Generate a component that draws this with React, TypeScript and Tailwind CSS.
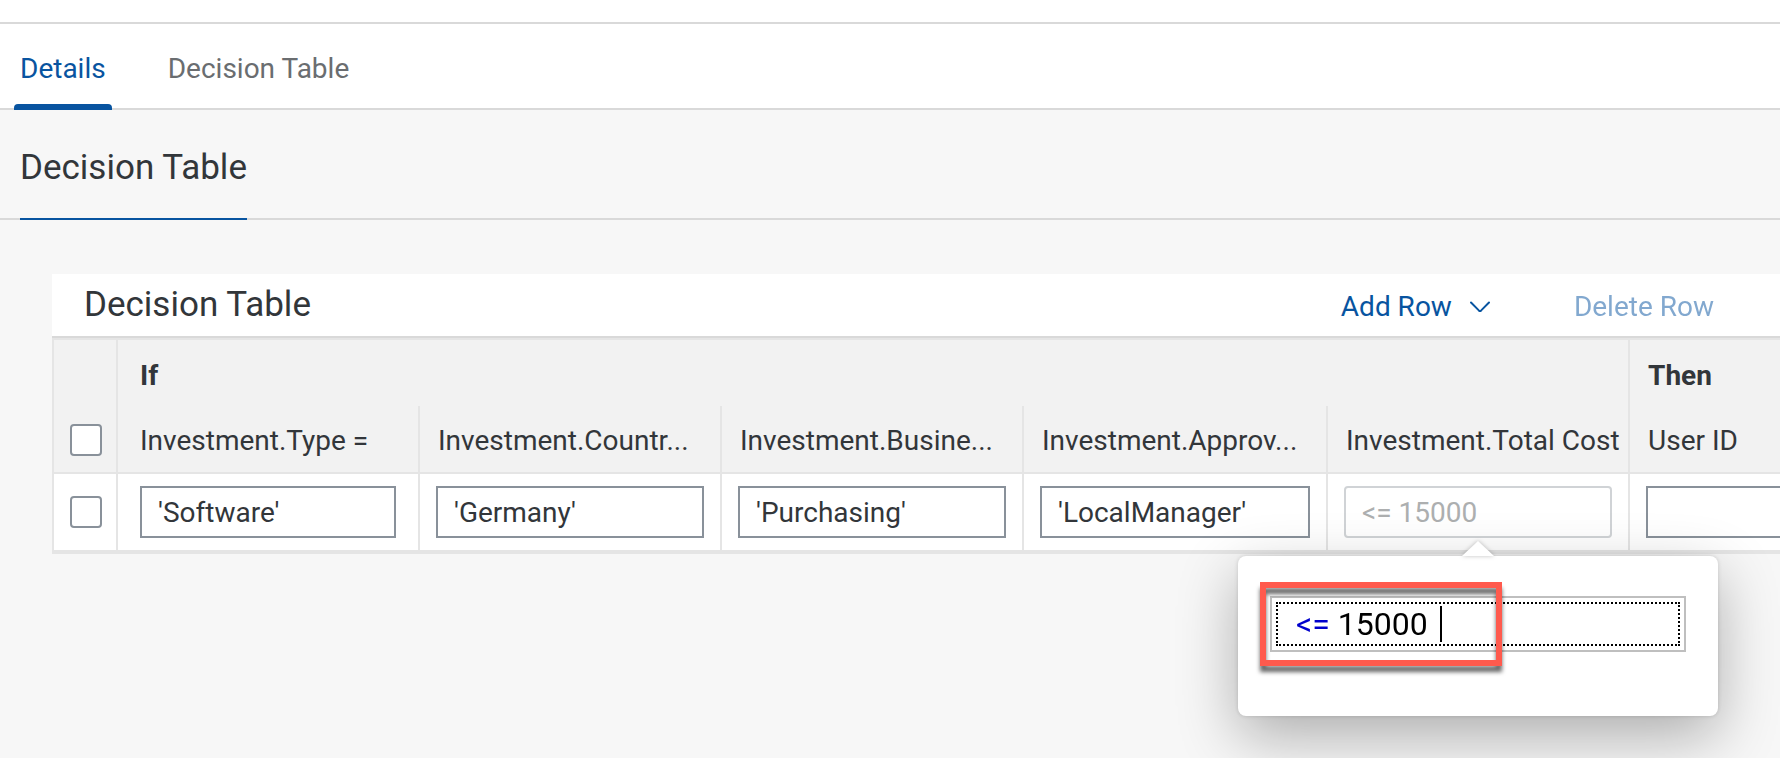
import React from "react";

const conditions = [
  { label: "Investment.Type =", value: "'Software'" },
  { label: "Investment.Countr...", value: "'Germany'" },
  { label: "Investment.Busine...", value: "'Purchasing'" },
  { label: "Investment.Approv...", value: "'LocalManager'" },
  { label: "Investment.Total Cost", value: "<= 15000", locked: true },
];

function RowCheckbox({ label }: { label: string }) {
  return (
    <input
      type="checkbox"
      aria-label={label}
      className="block h-8 w-8 appearance-none rounded border-2 border-[#89919a] bg-white checked:bg-[#0854a0]"
    />
  );
}

function ExpressionPopover() {
  return (
    <div
      role="dialog"
      aria-label="Edit expression"
      className="absolute top-full left-1/2 z-10 mt-[18px] w-[480px] -translate-x-1/2 rounded-lg bg-white px-8 pt-10 pb-16 shadow-[0_20px_60px_rgba(0,0,0,0.3),0_0_4px_rgba(0,0,0,0.15)]"
    >
      <svg
        className="absolute bottom-full left-1/2 -translate-x-1/2 drop-shadow-[0_0_2px_rgba(0,0,0,0.25)]"
        width="32"
        height="15"
        viewBox="0 0 32 15"
        aria-hidden="true"
      >
        <path d="M0 15 L16 0 L32 15 Z" fill="#fff" />
      </svg>
      <div className="relative border-2 border-[#bfbfbf] p-1">
        <div className="relative flex h-11 items-center border-2 border-dotted border-black">
          <input
            type="text"
            aria-label="Total cost expression"
            defaultValue="<= 15000"
            className="h-full w-full bg-[linear-gradient(90deg,#0000cc_56px,#000_56px)] bg-clip-text pl-[18px] text-[32px] leading-10 text-transparent outline-none"
          />
          <span className="absolute top-0.5 left-[162px] h-9 w-0.5 bg-black" />
        </div>
        <div className="pointer-events-none absolute -top-4 -left-3 h-[84px] w-[242px] border-[6px] border-[#ff5a4d] drop-shadow-[0_6px_2px_rgba(0,0,0,0.6)]" />
      </div>
    </div>
  );
}

export default function App() {
  return (
    <div className="min-h-screen overflow-x-clip bg-[#f7f7f7] font-[Roboto,sans-serif] text-[28px] leading-8 text-[#32363a]">
      <div className="h-6 border-b-2 border-[#d9d9d9] bg-white" />
      <nav className="flex h-[86px] gap-10 border-b-2 border-[#d9d9d9] bg-white px-3.5">
        <a href="#details" className="relative flex items-center px-1.5 pt-1.5 text-[#0854a0]">
          Details
          <span className="absolute inset-x-0 -bottom-0.5 h-1.5 rounded-t bg-[#0854a0]" />
        </a>
        <a href="#table" className="flex items-center pt-1.5 pl-4 text-[#6a6d70]">
          Decision Table
        </a>
      </nav>
      <header className="flex h-[110px] border-b-2 border-[#d9d9d9] px-5">
        <h1 className="-mb-0.5 flex items-center border-b-2 border-[#0854a0] pt-2 text-[35px]">Decision Table</h1>
      </header>
      <main className="pt-[54px] pl-[52px]">
        <section>
          <div className="flex h-16 items-center justify-between border-b-2 border-[#d9d9d9] bg-white pr-[66px] pl-8">
            <h2 className="text-[35px]">Decision Table</h2>
            <div className="flex items-center gap-20 pt-1">
              <button type="button" className="flex items-center gap-[18px] pr-1 text-[#0854a0]">
                Add Row
                <svg width="20" height="12" viewBox="0 0 20 12" fill="none" stroke="currentColor" strokeWidth="2" aria-hidden="true">
                  <path d="M1 1.5 L8.8 9.4 Q10 10.5 11.2 9.4 L19 1.5" strokeLinecap="round" />
                </svg>
              </button>
              <button type="button" disabled className="text-[#0854a0] opacity-50">
                Delete Row
              </button>
            </div>
          </div>
          <table className="w-[1880px] table-fixed border-separate border-spacing-0 border-t-2 border-l-2 border-[#e5e5e5] text-left">
            <colgroup>
              <col className="w-16" />
              <col className="w-[302px]" />
              <col className="w-[302px]" />
              <col className="w-[302px]" />
              <col className="w-[304px]" />
              <col className="w-[302px]" />
              <col className="w-[302px]" />
            </colgroup>
            <thead className="bg-[#f2f2f2]">
              <tr className="h-[66px]">
                <td className="border-r-2 border-[#e5e5e5]" />
                <th colSpan={5} className="border-r-2 border-[#e5e5e5] pt-1.5 pl-[22px] font-bold">
                  If
                </th>
                <th className="pt-1.5 pl-[18px] font-bold">Then</th>
              </tr>
              <tr className="h-[68px]">
                <td className="border-r-2 border-b-2 border-[#e5e5e5] pt-0.5 pl-4">
                  <RowCheckbox label="Select all rows" />
                </td>
                {conditions.map((c, i) => (
                  <th
                    key={c.label}
                    className={`border-r-2 border-b-2 border-[#e5e5e5] pt-1 font-normal whitespace-nowrap ${i === 0 ? "pl-[22px]" : "pl-[18px]"}`}
                  >
                    {c.label}
                  </th>
                ))}
                <th className="border-b-2 border-[#e5e5e5] pt-1 pl-[18px] font-normal">User ID</th>
              </tr>
            </thead>
            <tbody className="bg-white">
              <tr className="h-20">
                <td className="border-r-2 border-b-4 border-[#e5e5e5] pl-4">
                  <RowCheckbox label="Select row 1" />
                </td>
                {conditions.map((c, i) => (
                  <td key={c.label} className={`border-r-2 border-b-4 border-[#e5e5e5] ${i === 0 ? "px-[22px]" : "px-4"}`}>
                    <div className="relative">
                      <input
                        type="text"
                        aria-label={c.label}
                        defaultValue={c.value}
                        disabled={c.locked}
                        className={
                          c.locked
                            ? "block h-[52px] w-full rounded border-2 border-[#d0d3d6] bg-white px-4 text-[#adafb0]"
                            : "block h-[52px] w-full border-2 border-[#89919a] bg-white px-4"
                        }
                      />
                      {c.locked && <ExpressionPopover />}
                    </div>
                  </td>
                ))}
                <td className="border-b-4 border-[#e5e5e5] px-4">
                  <input type="text" aria-label="User ID" className="block h-[52px] w-full border-2 border-[#89919a] bg-white px-4" />
                </td>
              </tr>
            </tbody>
          </table>
        </section>
      </main>
    </div>
  );
}
